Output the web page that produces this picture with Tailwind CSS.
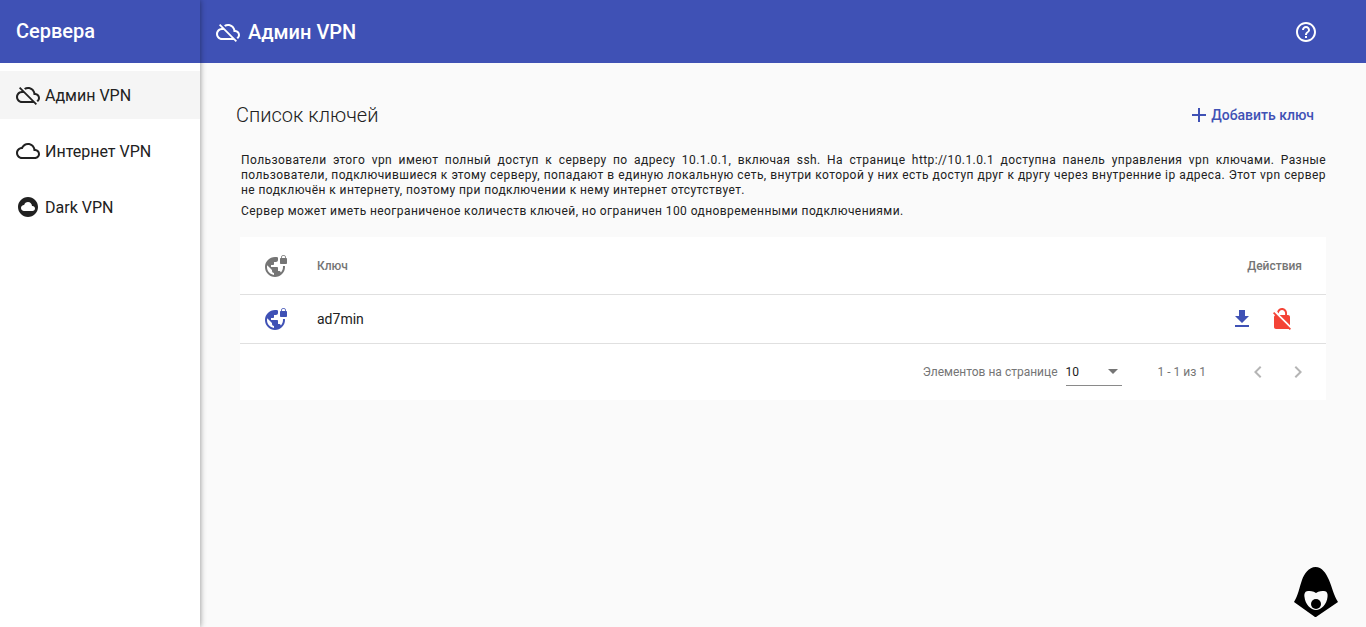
<!DOCTYPE html>
<html lang="ru">

<head>
    <meta charset="UTF-8">
    <title>Админ VPN</title>
    <script src="https://cdn.jsdelivr.net/npm/@tailwindcss/browser@4"></script>
</head>

<body class="font-['Roboto',sans-serif] bg-[#fafafa] text-[#212121] h-[627px] overflow-hidden">
    <div class="flex h-[627px] relative">
        <!-- sidebar -->
        <aside class="w-[200px] shrink-0 bg-white relative z-10 shadow-[0_0_6px_rgba(0,0,0,0.45)]">
            <div class="h-[63px] bg-[#3f51b5] text-white text-xl font-medium flex items-center pl-4 pb-[2px]">Сервера</div>
            <nav class="flex flex-col gap-2 pt-2">
                <a class="h-12 bg-[#f5f5f5] flex items-center pl-4 gap-[5px] text-base">
                    <svg class="w-6 h-6 fill-[#212121]" viewBox="0 0 24 24"><path d="M19.35 10.04C18.67 6.59 15.64 4 12 4c-1.48 0-2.85.43-4.01 1.17l1.46 1.46C10.21 6.23 11.08 6 12 6c3.04 0 5.5 2.46 5.5 5.5v.5H19c1.66 0 3 1.34 3 3 0 1.13-.64 2.11-1.56 2.62l1.45 1.45C23.16 18.16 24 16.68 24 15c0-2.64-2.05-4.78-4.65-4.96zM3 5.27l2.75 2.74C2.56 8.15 0 10.77 0 14c0 3.31 2.69 6 6 6h11.73l2 2L21 20.73 4.27 4 3 5.27zM7.73 10l8 8H6c-2.21 0-4-1.79-4-4s1.79-4 4-4h1.73z"/></svg>
                    <span class="mt-[2px]">Админ VPN</span>
                </a>
                <a class="h-12 flex items-center pl-4 gap-[5px] text-base">
                    <svg class="w-6 h-6 fill-[#212121]" viewBox="0 0 24 24"><path d="M19.35 10.04C18.67 6.59 15.64 4 12 4 9.11 4 6.6 5.64 5.35 8.04 2.34 8.36 0 10.91 0 14c0 3.31 2.69 6 6 6h13c2.76 0 5-2.24 5-5 0-2.64-2.05-4.78-4.65-4.96zM19 18H6c-2.21 0-4-1.79-4-4s1.79-4 4-4h.71C7.37 7.69 9.48 6 12 6c3.04 0 5.5 2.46 5.5 5.5v.5H19c1.66 0 3 1.34 3 3s-1.34 3-3 3z"/></svg>
                    <span class="mt-[2px]">Интернет VPN</span>
                </a>
                <a class="h-12 flex items-center pl-4 gap-[5px] text-base">
                    <svg class="w-6 h-6 fill-[#212121]" viewBox="0 0 24 24"><path d="M12 2C6.48 2 2 6.48 2 12s4.48 10 10 10 10-4.48 10-10S17.52 2 12 2zm4.5 14H8c-1.66 0-3-1.34-3-3s1.34-3 3-3l.14.01C8.58 8.28 10.13 7 12 7c2.21 0 4 1.79 4 4h.5c1.38 0 2.5 1.12 2.5 2.5S17.88 16 16.5 16z"/></svg>
                    <span class="mt-[2px]">Dark VPN</span>
                </a>
            </nav>
        </aside>

        <main class="flex-1 min-w-0 flex flex-col">
            <!-- toolbar -->
            <header class="h-[63px] shrink-0 bg-[#3f51b5] text-white flex items-center pl-4 pr-12 gap-2">
                <svg class="w-6 h-6 fill-white" viewBox="0 0 24 24"><path d="M19.35 10.04C18.67 6.59 15.64 4 12 4c-1.48 0-2.85.43-4.01 1.17l1.46 1.46C10.21 6.23 11.08 6 12 6c3.04 0 5.5 2.46 5.5 5.5v.5H19c1.66 0 3 1.34 3 3 0 1.13-.64 2.11-1.56 2.62l1.45 1.45C23.16 18.16 24 16.68 24 15c0-2.64-2.05-4.78-4.65-4.96zM3 5.27l2.75 2.74C2.56 8.15 0 10.77 0 14c0 3.31 2.69 6 6 6h11.73l2 2L21 20.73 4.27 4 3 5.27zM7.73 10l8 8H6c-2.21 0-4-1.79-4-4s1.79-4 4-4h1.73z"/></svg>
                <h1 class="text-xl font-medium flex-1">Админ VPN</h1>
                <svg class="w-6 h-6 fill-white" viewBox="0 0 24 24"><path d="M11 18h2v-2h-2v2zm1-16C6.48 2 2 6.48 2 12s4.48 10 10 10 10-4.48 10-10S17.52 2 12 2zm0 18c-4.41 0-8-3.59-8-8s3.59-8 8-8 8 3.59 8 8-3.59 8-8 8zm0-14c-2.21 0-4 1.79-4 4h2c0-1.1.9-2 2-2s2 .9 2 2c0 2-3 1.75-3 5h2c0-2.25 3-2.5 3-5 0-2.21-1.79-4-4-4z"/></svg>
            </header>

            <section class="pl-9 pr-10 pt-9">
                <div class="flex items-center justify-between h-8">
                    <h2 class="text-xl font-light">Список ключей</h2>
                    <button class="flex items-center text-sm font-medium text-[#3f51b5] pr-3">
                        <svg class="w-6 h-6 fill-[#3f51b5]" viewBox="0 0 24 24"><path d="M19 13h-6v6h-2v-6H5v-2h6V5h2v6h6v2z"/></svg>
                        Добавить ключ
                    </button>
                </div>

                <div class="pl-[5px] mt-[22px] text-xs leading-[15px] text-[#212121] tracking-[0.42px]">
                    <p class="text-justify">Пользователи этого vpn имеют полный доступ к серверу по адресу 10.1.0.1, включая ssh. На странице http://10.1.0.1 доступна панель управления vpn ключами. Разные пользователи, подключившиеся к этому серверу, попадают в единую локальную сеть, внутри которой у них есть доступ друг к другу через внутренние ip адреса. Этот vpn сервер не подключён к интернету, поэтому при подключении к нему интернет отсутствует.</p>
                    <p class="mt-[6px]">Сервер может иметь неограниченое количеств ключей, но ограничен 100 одновременными подключениями.</p>
                </div>

                <!-- table card -->
                <div class="ml-1 mt-[18px] bg-white">
                    <div class="h-[58px] flex items-center border-b border-[#e0e0e0] pl-6 pr-6 text-xs font-medium text-[#757575]">
                        <svg class="w-6 h-6 fill-[#757575]" viewBox="0 0 24 24"><path d="M22 4v-.5C22 2.12 20.88 1 19.5 1S17 2.12 17 3.5V4c-.55 0-1 .45-1 1v4c0 .55.45 1 1 1h5c.55 0 1-.45 1-1V5c0-.55-.45-1-1-1zm-.8 0h-3.4v-.5c0-.94.76-1.7 1.7-1.7s1.7.76 1.7 1.7V4zm-2.28 8c.04.33.08.66.08 1 0 2.08-.8 3.97-2.1 5.39-.26-.81-1-1.39-1.9-1.39h-1v-3c0-.55-.45-1-1-1H7v-2h2c.55 0 1-.45 1-1V8h2c1.1 0 2-.9 2-2V3.46c-.95-.3-1.95-.46-3-.46C5.48 3 1 7.48 1 13s4.48 10 10 10 10-4.48 10-10c0-.34-.02-.67-.05-1h-2.03zM10 20.93c-3.95-.49-7-3.85-7-7.93 0-.62.08-1.21.21-1.79L8 16v1c0 1.1.9 2 2 2v1.93z"/></svg>
                        <span class="ml-[29px] flex-1">Ключ</span>
                        <span>Действия</span>
                    </div>
                    <div class="h-[49px] flex items-center border-b border-[#e0e0e0] pl-6 pr-8 text-sm">
                        <svg class="w-6 h-6 fill-[#3f51b5]" viewBox="0 0 24 24"><path d="M22 4v-.5C22 2.12 20.88 1 19.5 1S17 2.12 17 3.5V4c-.55 0-1 .45-1 1v4c0 .55.45 1 1 1h5c.55 0 1-.45 1-1V5c0-.55-.45-1-1-1zm-.8 0h-3.4v-.5c0-.94.76-1.7 1.7-1.7s1.7.76 1.7 1.7V4zm-2.28 8c.04.33.08.66.08 1 0 2.08-.8 3.97-2.1 5.39-.26-.81-1-1.39-1.9-1.39h-1v-3c0-.55-.45-1-1-1H7v-2h2c.55 0 1-.45 1-1V8h2c1.1 0 2-.9 2-2V3.46c-.95-.3-1.95-.46-3-.46C5.48 3 1 7.48 1 13s4.48 10 10 10 10-4.48 10-10c0-.34-.02-.67-.05-1h-2.03zM10 20.93c-3.95-.49-7-3.85-7-7.93 0-.62.08-1.21.21-1.79L8 16v1c0 1.1.9 2 2 2v1.93z"/></svg>
                        <span class="ml-[29px] flex-1">ad7min</span>
                        <div class="flex items-center gap-4">
                            <svg class="w-6 h-6 fill-[#3f51b5]" viewBox="0 0 24 24"><path d="M19 9h-4V3H9v6H5l7 7 7-7zM5 18v2h14v-2H5z"/></svg>
                            <svg class="w-6 h-6 fill-[#f44336]" viewBox="0 0 24 24"><path d="M21 21.78L4.22 5 3 6.22l2.04 2.04C4.42 8.6 4 9.25 4 10v10c0 1.1.9 2 2 2h12c.23 0 .45-.05.66-.12L19.78 23 21 21.78zM8.9 6c0-1.71 1.39-3.1 3.1-3.1s3.1 1.39 3.1 3.1v2H9.66L20 18.34V10c0-1.1-.9-2-2-2h-1V6c0-2.76-2.24-5-5-5-2.32 0-4.26 1.59-4.82 3.74L8.9 6.46V6z"/></svg>
                        </div>
                    </div>
                    <!-- paginator -->
                    <div class="h-[56px] flex items-center justify-end pr-4 text-xs text-[#757575]">
                        <span>Элементов на странице</span>
                        <div class="ml-2 w-14 h-7 border-b border-[#8a8a8a] flex items-center justify-between text-[#212121]">
                            <span>10</span>
                            <span class="w-0 h-0 mr-1 border-x-[5px] border-x-transparent border-t-[5px] border-t-[#757575]"></span>
                        </div>
                        <span class="ml-9">1 - 1 из 1</span>
                        <svg class="w-6 h-6 ml-10 fill-[#b5b5b5]" viewBox="0 0 24 24"><path d="M15.41 7.41L14 6l-6 6 6 6 1.41-1.41L10.83 12z"/></svg>
                        <svg class="w-6 h-6 ml-4 fill-[#b5b5b5]" viewBox="0 0 24 24"><path d="M10 6L8.59 7.41 13.17 12l-4.58 4.59L10 18l6-6z"/></svg>
                    </div>
                </div>
            </section>
        </main>

        <!-- logo in the corner -->
        <svg class="absolute left-[1293px] top-[566px] w-[46px] h-[52px]" viewBox="0 0 46 52">
            <path fill="#000" fill-rule="evenodd" d="M22.5 1C16 1 11 8 9 14 6.500 21 5 30 1 36L22 51h1L45 36C41 30 39 21 36 14 33 7 29 1 22.500 1zM23 27C26 25 29 25 31 25 34 25 35 28 34.500 31 34 38 28 44 23 44 18 44 12 38 11.500 31 11 28 12 25 15 25 17 25 20 25 23 27z"/>
            <circle cx="23" cy="38" r="5" fill="#000"/>
        </svg>
    </div>
</body>

</html>
